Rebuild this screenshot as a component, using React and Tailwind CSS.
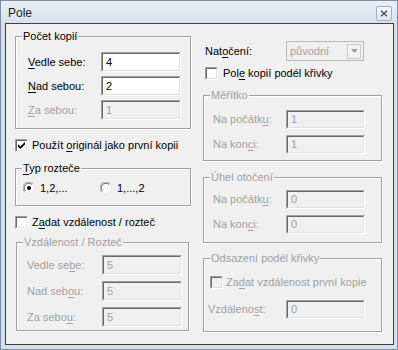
import React from "react";

function U({ t, i }) {
  return (
    <>
      {t.slice(0, i)}
      <span className="underline decoration-1 underline-offset-[2px]">{t[i]}</span>
      {t.slice(i + 1)}
    </>
  );
}

function Field({ value, disabled, h = "h-[20px]", w = "w-[80px]" }) {
  return (
    <div className={`${h} ${w} border border-t-[#a0a0a0] border-l-[#a0a0a0] border-r-white border-b-white`}>
      <div
        className={`h-full w-full border border-t-[#696969] border-l-[#696969] border-r-[#e3e3e3] border-b-[#e3e3e3] flex items-center pl-[3px] ${
          disabled ? "bg-[#f0f0f0] text-[#a0a0a0]" : "bg-white text-black"
        }`}
      >
        {value}
      </div>
    </div>
  );
}

function Check({ checked, disabled }) {
  return (
    <div className="w-[13px] h-[13px] shrink-0 border border-t-[#a0a0a0] border-l-[#a0a0a0] border-r-white border-b-white">
      <div
        className={`w-full h-full border border-t-[#696969] border-l-[#696969] border-r-[#e3e3e3] border-b-[#e3e3e3] flex items-center justify-center ${
          disabled ? "bg-[#f0f0f0]" : "bg-white"
        }`}
      >
        {checked && (
          <svg width="7" height="7" viewBox="0 0 7 7">
            <path d="M0 2.3 L2.3 4.6 L7 0 L7 2.4 L2.3 7 L0 4.7 Z" fill="#000" />
          </svg>
        )}
      </div>
    </div>
  );
}

function Radio({ checked }) {
  return (
    <svg width="12" height="12" viewBox="0 0 12 12" className="shrink-0">
      <circle cx="6" cy="6" r="5.5" fill="#fff" stroke="#e3e3e3" />
      <path d="M1.6 9.9 A5.5 5.5 0 0 1 9.9 1.6" fill="none" stroke="#a0a0a0" />
      <path d="M2.6 8.9 A4.3 4.3 0 0 1 8.9 2.6" fill="none" stroke="#696969" />
      {checked && <circle cx="6" cy="6" r="2" fill="#000" />}
    </svg>
  );
}

function Group({ title, disabled, className, children }) {
  return (
    <div
      className={`relative border border-[#a0a0a0] shadow-[1px_1px_0_#fff,inset_1px_1px_0_#fff] ${className}`}
    >
      <span
        className={`absolute -top-[7px] left-[6px] bg-[#f0f0f0] px-[1px] leading-[13px] ${
          disabled ? "text-[#a0a0a0]" : "text-black"
        }`}
      >
        {title}
      </span>
      {children}
    </div>
  );
}

function Row({ label, value, disabled, lw, h, w = "w-[80px]" }) {
  return (
    <div className="flex items-center">
      <span className={`${lw} ${disabled ? "text-[#a0a0a0]" : "text-black"}`}>{label}</span>
      <Field value={value} disabled={disabled} h={h} w={w} />
    </div>
  );
}

export default function App() {
  return (
    <div className="w-[398px] h-[350px] bg-[#d6e0ec] border border-[#7d8fa5] flex flex-col font-['Liberation_Sans',Arial,sans-serif] text-[11px] leading-[13px] text-black">
      {/* title bar */}
      <div className="h-[22px] flex items-center justify-between pl-[7px] pr-[5px] bg-gradient-to-b from-[#e8eef6] to-[#d8e2ee]">
        <span className="text-[12px] text-[#1e1e1e] mt-[2px]">Pole</span>
        <div className="w-[16px] h-[15px] mt-[3px] rounded-[2px] border border-[#a3b0c0] bg-gradient-to-b from-[#f6f8fb] to-[#e2e9f2] flex items-center justify-center">
          <svg width="8" height="7" viewBox="0 0 8 7">
            <path d="M1 0.8 L7 6.2 M7 0.8 L1 6.2" stroke="#4a5566" strokeWidth="1.5" />
          </svg>
        </div>
      </div>

      {/* client area */}
      <div className="ml-[4px] w-[389px] h-[322px] border border-[#3f3f3f] bg-[#f0f0f0] flex items-start">
        {/* left column */}
        <div className="ml-[9px] w-[176px] flex flex-col">
          <Group title="Počet kopií" className="mt-[12px] h-[93px] pt-[15px] pl-[12px]">
            <div className="flex flex-col gap-[4px]">
              <Row lw="w-[73px]" label={<U t="Vedle sebe:" i={0} />} value="4" />
              <Row lw="w-[73px]" label={<U t="Nad sebou:" i={0} />} value="2" />
              <Row lw="w-[73px]" label={<U t="Za sebou:" i={0} />} value="1" disabled />
            </div>
          </Group>

          <div className="mt-[10px] flex items-center gap-[4px]">
            <Check checked />
            <span>
              <U t="Použít originál jako první kopii" i={7} />
            </span>
          </div>

          <Group title={<U t="Typ rozteče" i={0} />} className="mt-[16px] h-[38px] pt-[13px] pl-[7px]">
            <div className="flex items-center h-[12px]">
              <div className="w-[77px] flex items-center gap-[5px]">
                <Radio checked />
                <span>1,2,...</span>
              </div>
              <div className="flex items-center gap-[5px]">
                <Radio />
                <span>1,...,2</span>
              </div>
            </div>
          </Group>

          <div className="mt-[10px] flex items-center gap-[4px]">
            <Check />
            <span>
              <U t="Zadat vzdálenost / rozteč" i={1} />
            </span>
          </div>

          <Group
            title="Vzdálenost / Rozteč"
            disabled
            className="mt-[13px] ml-[1px] w-[173px] h-[89px] pt-[12px] pl-[10px]"
          >
            <div className="flex flex-col gap-[6px]">
              <Row lw="w-[75px]" label={<U t="Vedle sebe:" i={8} />} value="5" disabled />
              <Row lw="w-[75px]" label={<U t="Nad sebou:" i={7} />} value="5" disabled />
              <Row lw="w-[75px]" label={<U t="Za sebou:" i={7} />} value="5" disabled />
            </div>
          </Group>
        </div>

        {/* right column */}
        <div className="ml-[12px] w-[179px] flex flex-col">
          <div className="mt-[17px] pl-[2px] flex items-center">
            <span className="w-[81px]">
              <U t="Natočení:" i={3} />
            </span>
            <div className="w-[78px] h-[20px] border border-[#b8b8b8] bg-[#f0f0f0] flex items-center">
              <span className="pl-[3px] text-[#a0a0a0]">původní</span>
              <div className="ml-auto mr-[2px] w-[14px] h-[15px] border border-[#cacaca] bg-[#f4f4f4] flex items-center justify-center">
                <svg width="7" height="4" viewBox="0 0 7 4">
                  <path d="M0 0 H7 L3.5 4 Z" fill="#a0a0a0" />
                </svg>
              </div>
            </div>
          </div>

          <div className="mt-[6px] ml-[2px] flex items-center gap-[5px]">
            <Check />
            <span>
              <U t="Pole kopií podél křivky" i={3} />
            </span>
          </div>

          <Group title="Měřítko" disabled className="mt-[15px] h-[66px] pt-[14px] pl-[9px]">
            <div className="flex flex-col gap-[6px]">
              <Row lw="w-[73px]" w="w-[79px]" h="h-[19px]" label={<U t="Na počátku:" i={9} />} value="1" disabled />
              <Row lw="w-[73px]" w="w-[79px]" h="h-[19px]" label={<U t="Na konci:" i={6} />} value="1" disabled />
            </div>
          </Group>

          <Group title="Úhel otočení" disabled className="mt-[16px] h-[66px] pt-[12px] pl-[9px]">
            <div className="flex flex-col gap-[6px]">
              <Row lw="w-[73px]" w="w-[79px]" h="h-[19px]" label={<U t="Na počátku:" i={9} />} value="0" disabled />
              <Row lw="w-[73px]" w="w-[79px]" h="h-[19px]" label={<U t="Na konci:" i={6} />} value="0" disabled />
            </div>
          </Group>

          <Group title="Odsazení podél křivky" disabled className="mt-[15px] h-[74px] pt-[17px]">
            <div className="pl-[6px] flex items-center gap-[3px] text-[#a0a0a0]">
              <Check disabled />
              <span>
                <U t="Zadat vzdálenost první kopie" i={2} />
              </span>
            </div>
            <div className="mt-[11px] pl-[4px]">
              <Row lw="w-[78px]" w="w-[79px]" h="h-[19px]" label={<U t="Vzdálenost:" i={8} />} value="0" disabled />
            </div>
          </Group>
        </div>
      </div>
    </div>
  );
}
